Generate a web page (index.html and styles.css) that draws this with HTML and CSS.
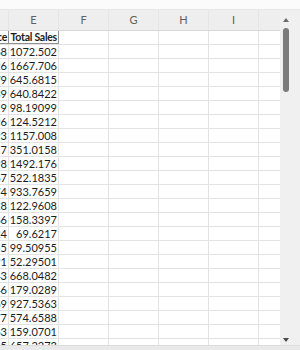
FILE: index.html
```html
<!DOCTYPE html>
<html>
<head>
<meta charset="utf-8">
<link rel="stylesheet" href="styles.css">
</head>
<body>
<div class="top"></div>
<div class="main">
  <div class="grid">
    <div class="row colhead">
      <div class="c cd">D</div><div class="c">E</div><div class="c">F</div><div class="c">G</div><div class="c">H</div><div class="c">I</div><div class="c cj">J</div>
    </div>
    <div class="row hdr">
      <div class="c cd b">Sale Price</div><div class="c b">Total Sales</div><div class="c"></div><div class="c"></div><div class="c"></div><div class="c"></div><div class="c cj"></div>
    </div>
    <div class="row"><div class="c cd">33.68</div><div class="c">1072.502</div><div class="c"></div><div class="c"></div><div class="c"></div><div class="c"></div><div class="c cj"></div></div>
    <div class="row"><div class="c cd">40.26</div><div class="c">1667.706</div><div class="c"></div><div class="c"></div><div class="c"></div><div class="c"></div><div class="c cj"></div></div>
    <div class="row"><div class="c cd">21.79</div><div class="c">645.6815</div><div class="c"></div><div class="c"></div><div class="c"></div><div class="c"></div><div class="c cj"></div></div>
    <div class="row"><div class="c cd">32.39</div><div class="c">640.8422</div><div class="c"></div><div class="c"></div><div class="c"></div><div class="c"></div><div class="c cj"></div></div>
    <div class="row"><div class="c cd">12.19</div><div class="c">98.19099</div><div class="c"></div><div class="c"></div><div class="c"></div><div class="c"></div><div class="c cj"></div></div>
    <div class="row"><div class="c cd">24.96</div><div class="c">124.5212</div><div class="c"></div><div class="c"></div><div class="c"></div><div class="c"></div><div class="c cj"></div></div>
    <div class="row"><div class="c cd">38.93</div><div class="c">1157.008</div><div class="c"></div><div class="c"></div><div class="c"></div><div class="c"></div><div class="c cj"></div></div>
    <div class="row"><div class="c cd">17.17</div><div class="c">351.0158</div><div class="c"></div><div class="c"></div><div class="c"></div><div class="c"></div><div class="c cj"></div></div>
    <div class="row"><div class="c cd">41.98</div><div class="c">1492.176</div><div class="c"></div><div class="c"></div><div class="c"></div><div class="c"></div><div class="c cj"></div></div>
    <div class="row"><div class="c cd">26.67</div><div class="c">522.1835</div><div class="c"></div><div class="c"></div><div class="c"></div><div class="c"></div><div class="c cj"></div></div>
    <div class="row"><div class="c cd">31.74</div><div class="c">933.7659</div><div class="c"></div><div class="c"></div><div class="c"></div><div class="c"></div><div class="c cj"></div></div>
    <div class="row"><div class="c cd">15.28</div><div class="c">122.9608</div><div class="c"></div><div class="c"></div><div class="c"></div><div class="c"></div><div class="c cj"></div></div>
    <div class="row"><div class="c cd">14.66</div><div class="c">158.3397</div><div class="c"></div><div class="c"></div><div class="c"></div><div class="c"></div><div class="c cj"></div></div>
    <div class="row"><div class="c cd">11.24</div><div class="c">69.6217</div><div class="c"></div><div class="c"></div><div class="c"></div><div class="c"></div><div class="c cj"></div></div>
    <div class="row"><div class="c cd">19.55</div><div class="c">99.50955</div><div class="c"></div><div class="c"></div><div class="c"></div><div class="c"></div><div class="c cj"></div></div>
    <div class="row"><div class="c cd">13.91</div><div class="c">52.29501</div><div class="c"></div><div class="c"></div><div class="c"></div><div class="c"></div><div class="c cj"></div></div>
    <div class="row"><div class="c cd">27.43</div><div class="c">668.0482</div><div class="c"></div><div class="c"></div><div class="c"></div><div class="c"></div><div class="c cj"></div></div>
    <div class="row"><div class="c cd">16.46</div><div class="c">179.0289</div><div class="c"></div><div class="c"></div><div class="c"></div><div class="c"></div><div class="c cj"></div></div>
    <div class="row"><div class="c cd">35.69</div><div class="c">927.5363</div><div class="c"></div><div class="c"></div><div class="c"></div><div class="c"></div><div class="c cj"></div></div>
    <div class="row"><div class="c cd">28.77</div><div class="c">574.6588</div><div class="c"></div><div class="c"></div><div class="c"></div><div class="c"></div><div class="c cj"></div></div>
    <div class="row"><div class="c cd">18.63</div><div class="c">159.0701</div><div class="c"></div><div class="c"></div><div class="c"></div><div class="c"></div><div class="c cj"></div></div>
    <div class="row"><div class="c cd">29.35</div><div class="c">657.2273</div><div class="c"></div><div class="c"></div><div class="c"></div><div class="c"></div><div class="c cj"></div></div>
  </div>
  <div class="vscroll">
    <div class="arrow up"></div>
    <div class="thumb"></div>
    <div class="spacer"></div>
    <div class="arrow down"></div>
  </div>
</div>
<div class="hbar"></div>
</body>
</html>
```
FILE: styles.css
```css
html, body {
  margin: 0;
  padding: 0;
}
body {
  width: 300px;
  height: 350px;
  overflow: hidden;
  background: #ffffff;
  font-family: Lato, "Liberation Sans", Arial, sans-serif;
  color: #1c1c1c;
}
.top {
  height: 9px;
  border-bottom: 1px solid #e6e6e6;
  background: #fbfbfb;
}
.main {
  display: flex;
  height: 335px;
}
.grid {
  width: 280px;
  overflow: hidden;
  background: #ffffff;
}
.row {
  display: flex;
  height: 13px;
  border-bottom: 1px solid #e3e3e3;
}
.c {
  flex: none;
  width: 48px;
  padding-right: 1px;
  border-right: 1px solid #e3e3e3;
  font-size: 11px;
  line-height: 14px;
  text-align: right;
  white-space: nowrap;
  overflow: hidden;
}
.c.cd {
  width: 7px;
  direction: rtl;
}
.c.cj {
  width: 21px;
  border-right: none;
}
.colhead {
  height: 20px;
  background: #eeeeee;
  border-bottom: 1px solid #d9d9d9;
}
.colhead .c {
  text-align: center;
  line-height: 20px;
  color: #606060;
  font-size: 11px;
  border-right: 1px solid #e6e6e6;
  padding-right: 0;
  width: 49px;
}
.colhead .c.cd {
  width: 8px;
  color: transparent;
}
.colhead .c.cj {
  width: 21px;
  color: transparent;
  border-right: none;
}
.hdr .c.b {
  font-weight: bold;
  letter-spacing: -0.25px;
  font-size: 10.5px;
  border-right-color: #909090;
  border-bottom: 1px solid #909090;
  height: 12px;
  line-height: 13px;
}
.vscroll {
  width: 20px;
  background: #f0f0f0;
  display: flex;
  flex-direction: column;
  align-items: flex-start;
  padding-left: 3px;
  box-sizing: border-box;
}
.arrow {
  width: 0;
  height: 0;
  border-left: 3.5px solid transparent;
  border-right: 3.5px solid transparent;
}
.arrow.up {
  border-bottom: 4px solid #6a6a6a;
  margin-top: 8px;
  margin-bottom: 6px;
}
.arrow.down {
  border-top: 4px solid #4a4a4a;
  margin-bottom: 3px;
}
.thumb {
  width: 6px;
  height: 64px;
  background: #7b7b7b;
  border-radius: 3px;
}
.spacer {
  flex: 1;
}
.hbar {
  height: 5px;
  background: #e9e9e9;
  border-top: 1px solid #dcdcdc;
  box-sizing: border-box;
}
```
